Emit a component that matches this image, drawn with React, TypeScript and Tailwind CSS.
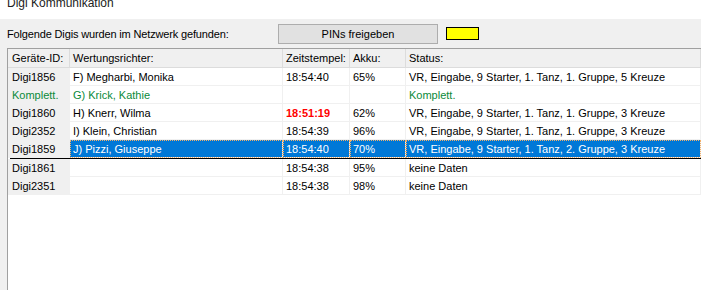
const cols = "grid grid-cols-[62px_213px_67px_56px_1fr]";

type Row = {
  id: string;
  name: string;
  time: string;
  akku: string;
  status: string;
  green?: boolean;
  late?: boolean;
  selected?: boolean;
};

const rows: Row[] = [
  { id: "Digi1856", name: "F) Megharbi, Monika", time: "18:54:40", akku: "65%", status: "VR, Eingabe, 9 Starter, 1. Tanz, 1. Gruppe, 5 Kreuze" },
  { id: "Komplett.", name: "G) Krick, Kathie", time: "", akku: "", status: "Komplett.", green: true },
  { id: "Digi1860", name: "H) Knerr, Wilma", time: "18:51:19", akku: "62%", status: "VR, Eingabe, 9 Starter, 1. Tanz, 1. Gruppe, 3 Kreuze", late: true },
  { id: "Digi2352", name: "I) Klein, Christian", time: "18:54:39", akku: "96%", status: "VR, Eingabe, 9 Starter, 1. Tanz, 1. Gruppe, 3 Kreuze" },
  { id: "Digi1859", name: "J) Pizzi, Giuseppe", time: "18:54:40", akku: "70%", status: "VR, Eingabe, 9 Starter, 1. Tanz, 2. Gruppe, 3 Kreuze", selected: true },
  { id: "Digi1861", name: "", time: "18:54:38", akku: "95%", status: "keine Daten" },
  { id: "Digi2351", name: "", time: "18:54:38", akku: "98%", status: "keine Daten" },
];

const Cell = ({ children, className = "" }: { children?: React.ReactNode; className?: string }) => (
  <div className={`h-[18px] leading-[18px] pl-[3px] border-r border-b border-[#f0f0f0] whitespace-nowrap overflow-hidden ${className}`}>
    {children}
  </div>
);

const App = () => {
  return (
    <div className="w-[701px] h-[290px] overflow-hidden bg-[#f0f0f0] text-[11px] text-black flex flex-col font-['Liberation_Sans',Arial,sans-serif]">
      {/* Fenstertitel, oben abgeschnitten */}
      <div className="h-[19px] bg-white shrink-0 overflow-hidden">
        <div className="pl-[7px] -mt-[5px] text-[12px] leading-[16px] text-[#222]">Digi Kommunikation</div>
      </div>

      {/* Kopfzeile */}
      <div className="h-[29px] shrink-0 flex items-center">
        <div className="pl-[7px] w-[278px] pt-[2px] tracking-[-0.15px]">Folgende Digis wurden im Netzwerk gefunden:</div>
        <button className="w-[160px] h-[20px] bg-[#e1e1e1] border border-[#adadad] text-center leading-[18px]">
          PINs freigeben
        </button>
        <div className="ml-[8px] w-[33px] h-[13px] bg-[#ffff00] border border-black" />
      </div>

      {/* Liste */}
      <div className="ml-[7px] flex-1 bg-white border-l border-t border-[#a0a0a0] overflow-hidden">
        <div className={`${cols} bg-[#f0f0f0] h-[19px]`}>
          {["Geräte-ID:", "Wertungsrichter:", "Zeitstempel:", "Akku:", "Status:"].map((h, i) => (
            <div
              key={h}
              className={`h-[19px] leading-[19px] border-r border-b border-[#dcdcdc] whitespace-nowrap ${i === 0 ? "pl-[4px]" : "pl-[3px]"}`}
            >
              {h}
            </div>
          ))}
        </div>

        {rows.map((r) => (
          <div key={r.id + r.name}>
            <div className={cols}>
              <Cell className={`bg-[#f0f0f0] pl-[4px] border-[#e4e4e4] ${r.green ? "text-[#0a8a3a]" : ""}`}>{r.id}</Cell>
              {[r.name, r.time, r.akku, r.status].map((v, i) => (
                <Cell
                  key={i}
                  className={
                    r.selected
                      ? "bg-[#0078d7] text-white border-[#0078d7] outline-1 outline-dotted outline-[#f3b06a] -outline-offset-1"
                      : r.green
                      ? "text-[#0a8a3a]"
                      : r.late && i === 1
                      ? "text-[#ff0000] font-bold"
                      : ""
                  }
                >
                  {v}
                </Cell>
              ))}
            </div>
            {r.selected && <div className="h-[2px] -mt-[1px] ml-[2px] bg-black" />}
          </div>
        ))}
      </div>
    </div>
  );
};

export default App;
